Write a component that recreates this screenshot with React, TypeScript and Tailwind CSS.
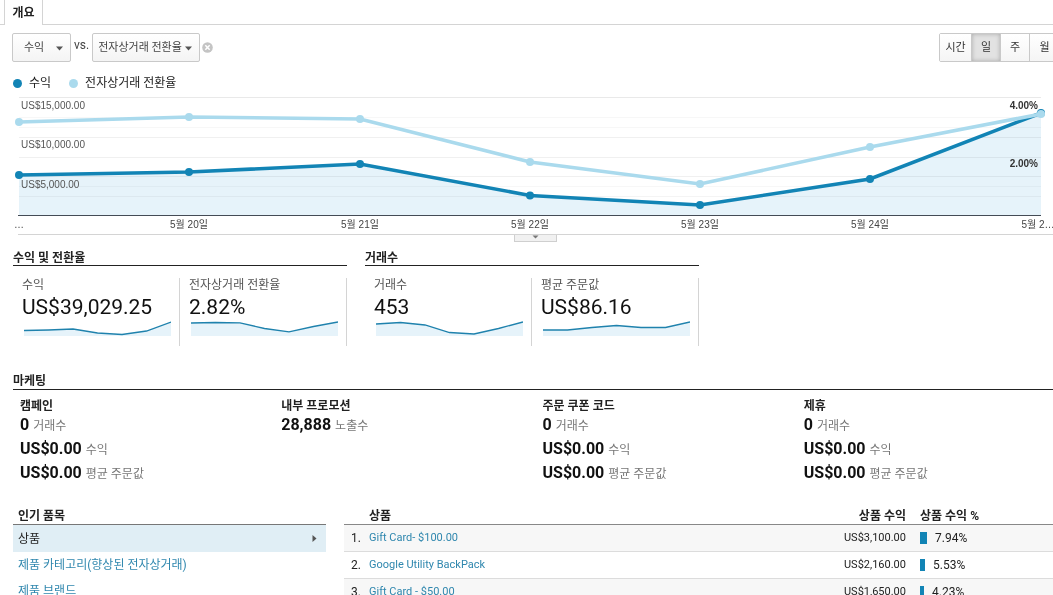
import React from 'react';

const DATES = ['…', '5월 20일', '5월 21일', '5월 22일', '5월 23일', '5월 24일', '5월 2…'];
const XS = [19, 189, 360, 530, 700, 870, 1041];
const REVENUE = [79, 76, 68, 99.5, 109, 83, 17];
const CONVERSION = [26, 21, 23, 66, 88, 51, 18];
const GRID = [
  { y: 1, color: '#e9e9e9' },
  { y: 21, color: '#f7f7f7' },
  { y: 31, color: '#f7f7f7' },
  { y: 41, color: '#f0f0f0' },
  { y: 61, color: '#f0f0f0' },
  { y: 80, color: '#f0f0f0' },
  { y: 90, color: '#f7f7f7' },
  { y: 100, color: '#f4f4f4' },
];

const points = (xs: number[], ys: number[]) => xs.map((x, i) => `${x},${ys[i]}`).join(' ');

function MetricSelect({ label, value, className }: { label: string; value: string; className: string }) {
  return (
    <div className="relative shrink-0">
      <select
        aria-label={label}
        className={`block h-[29px] appearance-none rounded-[2px] border border-[#c9c9c9] bg-linear-to-b from-white to-[#f4f4f4] pt-[2px] text-[11px] text-[#444] ${className}`}
      >
        <option>{value}</option>
      </select>
      <svg className="pointer-events-none absolute top-[13px] right-[8px]" width="7" height="5" viewBox="0 0 7 5">
        <path d="M0 0.5h7L3.5 4.5z" fill="#555" />
      </svg>
    </div>
  );
}

function TrendChart() {
  return (
    <svg className="block w-full" viewBox="0 0 1053 138" role="img" aria-label="수익 및 전자상거래 전환율">
      <polygon points={`19,119 ${points(XS, REVENUE)} 1041,119`} fill="#e6f3fa" />
      <g className="mix-blend-multiply">
        {GRID.map((g) => (
          <line key={g.y} x1="19" x2="1041" y1={g.y + 0.5} y2={g.y + 0.5} stroke={g.color} />
        ))}
      </g>
      <line x1="18" x2="1041" y1="119.5" y2="119.5" stroke="#444b55" />
      <polyline points={points(XS, REVENUE)} fill="none" stroke="#1284b5" strokeWidth="3.6" />
      {XS.map((x, i) => (
        <circle key={x} cx={x} cy={REVENUE[i]} r="4" fill="#1284b5" />
      ))}
      <polyline points={points(XS, CONVERSION)} fill="none" stroke="#aadaed" strokeWidth="3.6" />
      {XS.map((x, i) => (
        <circle key={x} cx={x} cy={CONVERSION[i]} r="4" fill="#aadaed" />
      ))}
      <g fontSize="10" fill="#555" fontFamily="'Liberation Sans', 'Noto Sans CJK KR', sans-serif">
        <text x="21" y="13">US$15,000.00</text>
        <text x="21" y="52">US$10,000.00</text>
        <text x="21" y="92">US$5,000.00</text>
        <g textAnchor="end" fontWeight="bold" fill="#333">
          <text x="1038" y="13">4.00%</text>
          <text x="1038" y="71">2.00%</text>
        </g>
        <g textAnchor="middle" fill="#444">
          {DATES.map((d, i) => (
            <text key={d} x={i === 6 ? 1038 : XS[i]} y="132">{d}</text>
          ))}
        </g>
      </g>
    </svg>
  );
}

const SPARK_X = [0, 24.5, 49, 73.5, 98, 122.5, 147];

function Metric({ label, value, ys }: { label: string; value: string; ys: number[] }) {
  return (
    <div className="h-[68px] border-r border-[#d4d4d4] pl-[9px]">
      <div className="text-[12px] leading-[15px] text-[#555]">{label}</div>
      <div className="pt-px text-[21px] leading-[27px] text-[#111]">{value}</div>
      <svg className="ml-[2px] block" width="147" height="15" viewBox="0 0 147 15">
        <polygon points={`0,15 ${points(SPARK_X, ys)} 147,15`} fill="#e6f3fa" />
        <polyline points={points(SPARK_X, ys)} fill="none" stroke="#1f82ad" strokeWidth="1.3" />
      </svg>
    </div>
  );
}

const METRIC_GROUPS = [
  {
    title: '수익 및 전환율',
    metrics: [
      { label: '수익', value: 'US$39,029.25', ys: [9.5, 9, 8, 12, 13.5, 10, 1] },
      { label: '전자상거래 전환율', value: '2.82%', ys: [2, 1.5, 1.8, 7.5, 10.8, 5.5, 1] },
    ],
  },
  {
    title: '거래수',
    metrics: [
      { label: '거래수', value: '453', ys: [3, 1.5, 4, 11.5, 13, 7.5, 1] },
      { label: '평균 주문값', value: 'US$86.16', ys: [9, 9, 6.5, 4.5, 6.5, 6.5, 1] },
    ],
  },
];

const ORDER_STATS = [
  ['0', '거래수'],
  ['US$0.00', '수익'],
  ['US$0.00', '평균 주문값'],
];

const MARKETING = [
  { title: '캠페인', stats: ORDER_STATS },
  { title: '내부 프로모션', stats: [['28,888', '노출수']] },
  { title: '주문 쿠폰 코드', stats: ORDER_STATS },
  { title: '제휴', stats: ORDER_STATS },
];

const PRODUCTS = [
  { name: 'Gift Card- $100.00', revenue: 'US$3,100.00', pct: 7.94 },
  { name: 'Google Utility BackPack', revenue: 'US$2,160.00', pct: 5.53 },
  { name: 'Gift Card - $50.00', revenue: 'US$1,650.00', pct: 4.23 },
];

const PERIODS = [
  { name: '시간', className: 'w-[32px]' },
  { name: '일', className: 'w-[29px]' },
  { name: '주', className: 'w-[29px]' },
  { name: '월', className: 'w-[30px]' },
];

export default function App() {
  return (
    <div className="h-screen overflow-hidden bg-white font-['Roboto','Noto_Sans_CJK_KR',sans-serif] text-[12px] text-[#222]">
      <nav className="flex h-[25px] items-stretch">
        <div className="w-1 border-b border-[#d4d4d4]" />
        <a href="#overview" className="flex w-[39px] items-center justify-center border-x border-[#d4d4d4] font-bold text-[#222]">
          개요
        </a>
        <div className="flex-1 border-b border-[#d4d4d4]" />
      </nav>

      <div className="mt-2 flex pl-3">
        <MetricSelect label="기본 측정항목" value="수익" className="w-[59px] pl-[11px]" />
        <span className="mx-[3px] leading-[25px] text-[#444]">vs.</span>
        <MetricSelect label="비교 측정항목" value="전자상거래 전환율" className="w-[108px] pl-[5px]" />
        <button aria-label="측정항목 삭제" className="ml-[2px] h-[29px]">
          <svg width="11" height="11" viewBox="0 0 11 11">
            <circle cx="5.5" cy="5.5" r="5.3" fill="#c4c4c4" />
            <path d="M3.3 3.3l4.4 4.4M7.7 3.3L3.3 7.7" stroke="#fff" strokeWidth="1.5" />
          </svg>
        </button>
        <div className="-mr-2 ml-auto flex h-[29px] shrink-0 rounded-[2px] border border-[#c9c9c9] text-[11px] text-[#333]">
          {PERIODS.map((p) => (
            <button
              key={p.name}
              aria-pressed={p.name === '일'}
              className={`${p.className} border-r border-[#c9c9c9] bg-linear-to-b from-white to-[#f5f5f5] pt-[2px] aria-pressed:bg-[#e2e2e2] aria-pressed:bg-none aria-pressed:shadow-[inset_0_0_4px_#aaa]`}
            >
              {p.name}
            </button>
          ))}
        </div>
      </div>

      <div className="mt-[11px] flex h-[20px] items-center pl-[13px]">
        <span className="size-[9px] rounded-full bg-[#1284b5]" />
        <span className="ml-[7px]">수익</span>
        <span className="ml-[18px] size-[9px] rounded-full bg-[#aadaed]" />
        <span className="ml-[7px]">전자상거래 전환율</span>
      </div>

      <div className="mt-[3px]">
        <TrendChart />
        <div className="ml-[18px] flex justify-center border-t border-[#d4d4d4]">
          <button aria-label="그래프 크기 조절" className="flex h-[7px] w-[43px] items-start justify-center border border-t-0 border-[#cfcfcf] bg-[#f1f1f1]">
            <svg width="7" height="4" viewBox="0 0 7 4">
              <path d="M0.5 0.5h6l-3 3z" fill="#777" />
            </svg>
          </button>
        </div>
      </div>

      <div className="mt-[10px] mr-[2px] ml-[13px] grid grid-cols-3 gap-[18px]">
        {METRIC_GROUPS.map((g) => (
          <section key={g.title}>
            <h2 className="border-b border-[#222] leading-[13px] font-bold">{g.title}</h2>
            <div className="mt-3 grid grid-cols-2">
              {g.metrics.map((m) => (
                <Metric key={m.label} {...m} />
              ))}
            </div>
          </section>
        ))}
      </div>

      <section className="mt-[27px]">
        <h2 className="ml-[13px] border-b border-[#222] leading-[16px] font-bold">마케팅</h2>
        <div className="mt-2 -mr-3 ml-5 grid grid-cols-4">
          {MARKETING.map((m) => (
            <div key={m.title}>
              <h3 className="leading-[16px] font-bold">{m.title}</h3>
              {m.stats.map(([value, label]) => (
                <p key={label} className="h-[24px] leading-[22px] whitespace-nowrap text-[#777]">
                  <strong className="mr-1 text-[16px] font-bold text-[#111]">{value}</strong>
                  {label}
                </p>
              ))}
            </div>
          ))}
        </div>
      </section>

      <div className="mt-[22px] ml-[13px] flex gap-[18px]">
        <section className="w-[313px] shrink-0">
          <h2 className="border-b border-[#777] pl-[5px] leading-[16px] font-bold">인기 품목</h2>
          <ul>
            <li className="flex h-[27px] items-center justify-between bg-[#e0eef5] pr-[9px] pl-[5px]">
              상품
              <svg width="5" height="7" viewBox="0 0 5 7">
                <path d="M0.5 0L4.5 3.5L0.5 7z" fill="#555" />
              </svg>
            </li>
            {['제품 카테고리(향상된 전자상거래)', '제품 브랜드'].map((t) => (
              <li key={t} className="flex h-[26px] items-center pl-[5px]">
                <a href="#category" className="text-[#2f87ae]">{t}</a>
              </li>
            ))}
          </ul>
        </section>
        <table className="h-fit flex-1 table-fixed border-separate border-spacing-0">
          <thead>
            <tr className="h-[17px] leading-[16px] *:border-b *:border-[#888] *:p-0">
              <th className="w-[25px]" />
              <th className="text-left">상품</th>
              <th className="w-[100px] text-right">상품 수익</th>
              <th className="w-[147px] pl-[14px]! text-left">상품 수익 %</th>
            </tr>
          </thead>
          <tbody>
            {PRODUCTS.map((p, i) => (
              <tr key={p.name} className="h-[27px] odd:bg-[#f7f7f7] *:border-b *:border-[#dcdcdc] *:p-0">
                <td className="pl-[7px]!">{i + 1}.</td>
                <td className="text-[11px]"><a href="#product" className="text-[#2f87ae]">{p.name}</a></td>
                <td className="text-right text-[11px]">{p.revenue}</td>
                <td>
                  <div className="flex items-center gap-2 pl-[14px]">
                    <span className="h-[12px] bg-[#1284b5]" style={{ width: Math.round(p.pct * 0.9) }} />
                    {p.pct}%
                  </div>
                </td>
              </tr>
            ))}
          </tbody>
        </table>
      </div>
    </div>
  );
}
